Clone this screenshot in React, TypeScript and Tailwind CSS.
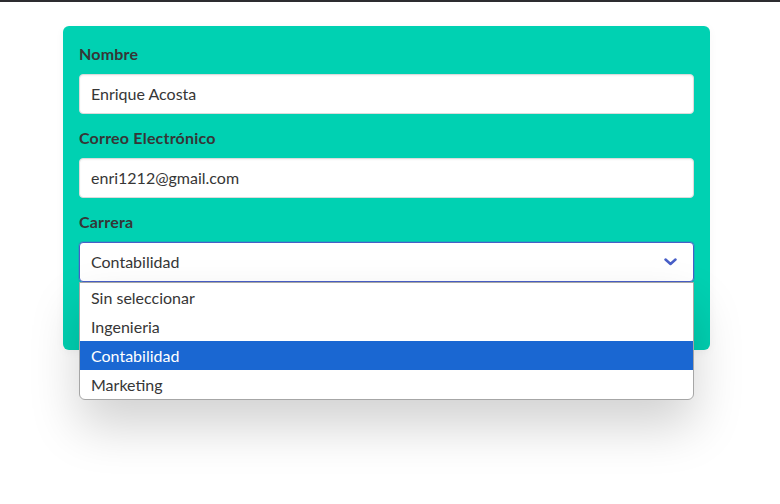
const OPTIONS = ['Sin seleccionar', 'Ingenieria', 'Contabilidad', 'Marketing']

function Field({ label, value }: { label: string; value: string }) {
  return (
    <div className="mb-3">
      <label className="block mb-2 text-base leading-6 font-bold text-[#363636] tracking-[0.2px]">{label}</label>
      <div className="h-10 flex items-center px-[11px] bg-white border border-[#dbdbdb] rounded shadow-[inset_0_1px_2px_rgba(10,10,10,0.05)] text-base text-[#363636]">
        {value}
      </div>
    </div>
  )
}

export default function App() {
  return (
    <div className="min-h-[504px] bg-white font-['Lato','Noto_Sans',sans-serif]">
      <div className="h-[2px] bg-[#2d2c30]" />

      <div className="pt-6 pl-[63px]">
        <div className="w-[647px] rounded-md bg-[#00d1b2] p-4 shadow-[0_2px_10px_rgba(10,10,10,0.04)]">
          <Field label="Nombre" value="Enrique Acosta" />
          <Field label="Correo Electrónico" value="enri1212@gmail.com" />

          <div className="relative">
            <label className="block mb-2 text-base leading-6 font-bold text-[#363636] tracking-[0.2px]">Carrera</label>
            <div className="h-10 flex items-center justify-between px-[11px] bg-white border border-[#485fc7] rounded shadow-[0_0_0_1px_rgba(72,95,199,0.25)] text-base text-[#363636]">
              <span>Contabilidad</span>
              <svg width="13" height="8" viewBox="0 0 13 8" className="mr-[5px]">
                <polyline points="1.5,1.5 6.5,6 11.5,1.5" fill="none" stroke="#485fc7" strokeWidth="2.5" strokeLinecap="round" strokeLinejoin="round" />
              </svg>
            </div>

            {/* hidden submit button under the open list */}
            <div className="mt-3 h-10" />

            {/* open native list */}
            <div className="absolute left-0 top-[72px] w-full z-10 bg-white border border-[#a6a6a6] rounded-b-md overflow-hidden shadow-[0_26px_50px_rgba(0,0,0,0.18)]">
              {OPTIONS.map(o => (
                <div
                  key={o}
                  className={`h-[29px] flex items-center px-[11px] text-base ${
                    o === 'Contabilidad' ? 'bg-[#1a67d2] text-white' : 'text-[#363636]'
                  }`}
                >
                  {o}
                </div>
              ))}
            </div>
          </div>
        </div>
      </div>
    </div>
  )
}
